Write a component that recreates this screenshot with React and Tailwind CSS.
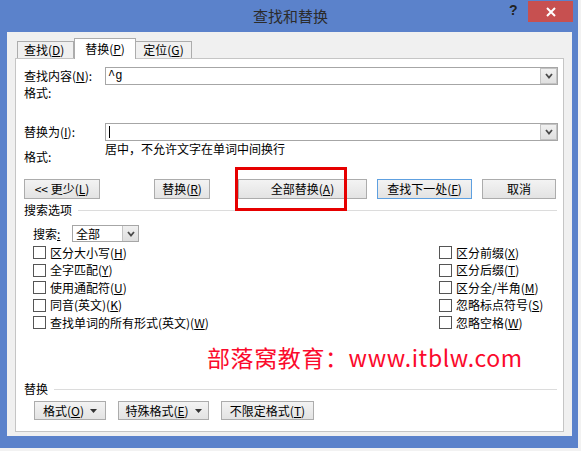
import React from "react";

const U = ({ c }) => <span className="underline underline-offset-[1px]">{c}</span>;

function Chevron() {
  return (
    <svg width="8" height="6" viewBox="0 0 8 6">
      <path d="M1 1 L4 4.5 L7 1" fill="none" stroke="#4a4a4a" strokeWidth="1.8" />
    </svg>
  );
}

function Tri() {
  return (
    <svg width="7" height="4" viewBox="0 0 7 4" className="ml-[6px]">
      <path d="M0 0 L7 0 L3.5 4 Z" fill="#333" />
    </svg>
  );
}

function Btn({ className, focus, children }) {
  return (
    <div
      className={
        "flex items-center justify-center border bg-gradient-to-b from-[#f3f3f3] to-[#e3e3e3] text-black whitespace-nowrap " +
        (focus ? "border-[#5ea0e0] " : "border-[#acacac] ") +
        className
      }
    >
      {children}
    </div>
  );
}

function Cb({ children }) {
  return (
    <div className="h-[17.5px] flex items-center gap-[4px]">
      <div className="w-[13px] h-[13px] border border-[#555] bg-white shrink-0" />
      <span className="whitespace-nowrap">{children}</span>
    </div>
  );
}

function DropBtn() {
  return (
    <div className="w-[17px] h-[16px] border border-[#c3c3c3] bg-gradient-to-b from-[#f0f0f0] to-[#e0e0e0] flex items-center justify-center">
      <Chevron />
    </div>
  );
}

export default function App() {
  return (
    <div className="w-[581px] h-[451px] bg-[#f2f2f2] overflow-hidden font-['SimSun','Noto_Sans_CJK_SC',sans-serif] text-[12px] leading-[14px] text-black">
      <div className="w-[578px] h-[448px] bg-[#5b82cb] flex flex-col">
        {/* title bar */}
        <div className="h-[32px] relative flex items-center justify-center">
          <span className="text-[15px] leading-[20px] text-[#2b2b2b] font-['Noto_Sans_CJK_SC',sans-serif] ml-[3px]">
            查找和替换
          </span>
          <span className="absolute left-[509px] top-[3px] text-[14px] font-bold text-[#222] font-['Liberation_Sans',sans-serif]">
            ?
          </span>
          <div className="absolute left-[528px] top-[1px] w-[45px] h-[21px] bg-[#c75050] flex items-center justify-center">
            <svg width="10" height="10" viewBox="0 0 10 10">
              <path d="M1 1 L9 9 M9 1 L1 9" stroke="#fff" strokeWidth="2" />
            </svg>
          </div>
        </div>
        {/* body */}
        <div className="ml-[7px] mr-[6px] h-[404px] bg-[#f0f0f0] flex flex-col px-[8px]">
          {/* tabs */}
          <div className="h-[26px] flex items-end pl-[2px] relative z-10">
            <div className="w-[57px] h-[17px] border border-b-0 border-[#acacac] bg-[#f0f0f0] flex items-center pl-[6px]">
              查找(<U c="D" />)
            </div>
            <div className="w-[62px] h-[21px] -mb-[1px] border border-b-0 border-[#acacac] bg-white flex items-center justify-center">
              替换(<U c="P" />)
            </div>
            <div className="w-[56px] h-[17px] border border-b-0 border-l-0 border-[#acacac] bg-[#f0f0f0] flex items-center justify-center">
              定位(<U c="G" />)
            </div>
          </div>
          {/* panel */}
          <div className="h-[374px] border border-[#c5c5c5] bg-white relative flex flex-col pl-[8px] pr-[5px] pt-[8px]">
            <div className="h-[18px] flex items-center">
              <div className="w-[81px]">
                查找内容(<U c="N" />):
              </div>
              <div className="flex-1 h-[18px] border border-[#a6a6a6] bg-white flex items-center">
                <span className="pl-[2px] font-['Liberation_Mono',monospace]">^g</span>
                <div className="ml-auto">
                  <DropBtn />
                </div>
              </div>
            </div>
            <div className="h-[16px] flex items-center">格式:</div>
            <div className="mt-[22px] h-[18px] flex items-center">
              <div className="w-[81px]">
                替换为(<U c="I" />):
              </div>
              <div className="flex-1 h-[18px] border border-[#a6a6a6] bg-white flex items-center">
                <div className="ml-[3px] w-px h-[12px] bg-black" />
                <div className="ml-auto">
                  <DropBtn />
                </div>
              </div>
            </div>
            <div className="h-[24px] flex items-start">
              <div className="w-[81px] pt-[9px]">格式:</div>
              <div className="pt-[1px]">居中，不允许文字在单词中间换行</div>
            </div>
            {/* buttons */}
            <div className="mt-[14px] h-[20px] flex">
              <Btn className="w-[76px]">
                &lt;&lt; 更少(<U c="L" />)
              </Btn>
              <Btn className="ml-[54px] w-[56px]">
                替换(<U c="R" />)
              </Btn>
              <Btn className="ml-[28px] w-[129px]">
                全部替换(<U c="A" />)
              </Btn>
              <Btn className="ml-[10px] w-[95px]" focus>
                查找下一处(<U c="F" />)
              </Btn>
              <Btn className="ml-[10px] w-[74px]">取消</Btn>
            </div>
            <div className="mt-[3px] h-[16px] flex items-center pr-[1px]">
              <span>搜索选项</span>
              <div className="flex-1 ml-[6px] h-px bg-[#dcdcdc]" />
            </div>
            <div className="mt-[7px] h-[17px] flex items-center">
              <div className="ml-[9px] w-[39px]">
                搜索<span className="underline">:</span>
              </div>
              <div className="w-[67px] h-[17px] border border-[#a6a6a6] bg-white flex items-center">
                <span className="pl-[3px]">全部</span>
                <div className="ml-auto w-[16px] h-[15px] bg-gradient-to-b from-[#f0f0f0] to-[#dedede] border-l border-[#c3c3c3] flex items-center justify-center">
                  <Chevron />
                </div>
              </div>
            </div>
            <div className="mt-[2px] flex">
              <div className="ml-[9px] w-[406px] flex flex-col">
                <Cb>
                  区分大小写(<U c="H" />)
                </Cb>
                <Cb>
                  全字匹配(<U c="Y" />)
                </Cb>
                <Cb>
                  使用通配符(<U c="U" />)
                </Cb>
                <Cb>
                  同音(英文)(<U c="K" />)
                </Cb>
                <Cb>
                  查找单词的所有形式(英文)(<U c="W" />)
                </Cb>
              </div>
              <div className="flex flex-col">
                <Cb>
                  区分前缀(<U c="X" />)
                </Cb>
                <Cb>
                  区分后缀(<U c="T" />)
                </Cb>
                <Cb>
                  区分全/半角(<U c="M" />)
                </Cb>
                <Cb>
                  忽略标点符号(<U c="S" />)
                </Cb>
                <Cb>
                  忽略空格(<U c="W" />)
                </Cb>
              </div>
            </div>
            <div className="mt-[10px] h-[31px] ml-[183px] text-[23px] leading-[31px] tracking-[0.6px] text-[#fb0a2c] whitespace-nowrap font-['Noto_Sans_CJK_SC',sans-serif]">
              部落窝教育：www.itblw.com
            </div>
            <div className="mt-[8.5px] h-[16px] flex items-center pr-[1px]">
              <span>替换</span>
              <div className="flex-1 ml-[6px] h-px bg-[#dcdcdc]" />
            </div>
            <div className="mt-[4px] h-[19px] flex">
              <Btn className="ml-[10px] w-[72px]">
                格式(<U c="O" />)
                <Tri />
              </Btn>
              <Btn className="ml-[12px] w-[91px]">
                特殊格式(<U c="E" />)
                <Tri />
              </Btn>
              <Btn className="ml-[12px] w-[93px]">
                不限定格式(<U c="T" />)
              </Btn>
            </div>
            {/* red highlight */}
            <div className="absolute left-[219px] top-[108px] w-[112px] h-[44px] border-[3px] border-[#e60000]" />
          </div>
        </div>
      </div>
    </div>
  );
}
